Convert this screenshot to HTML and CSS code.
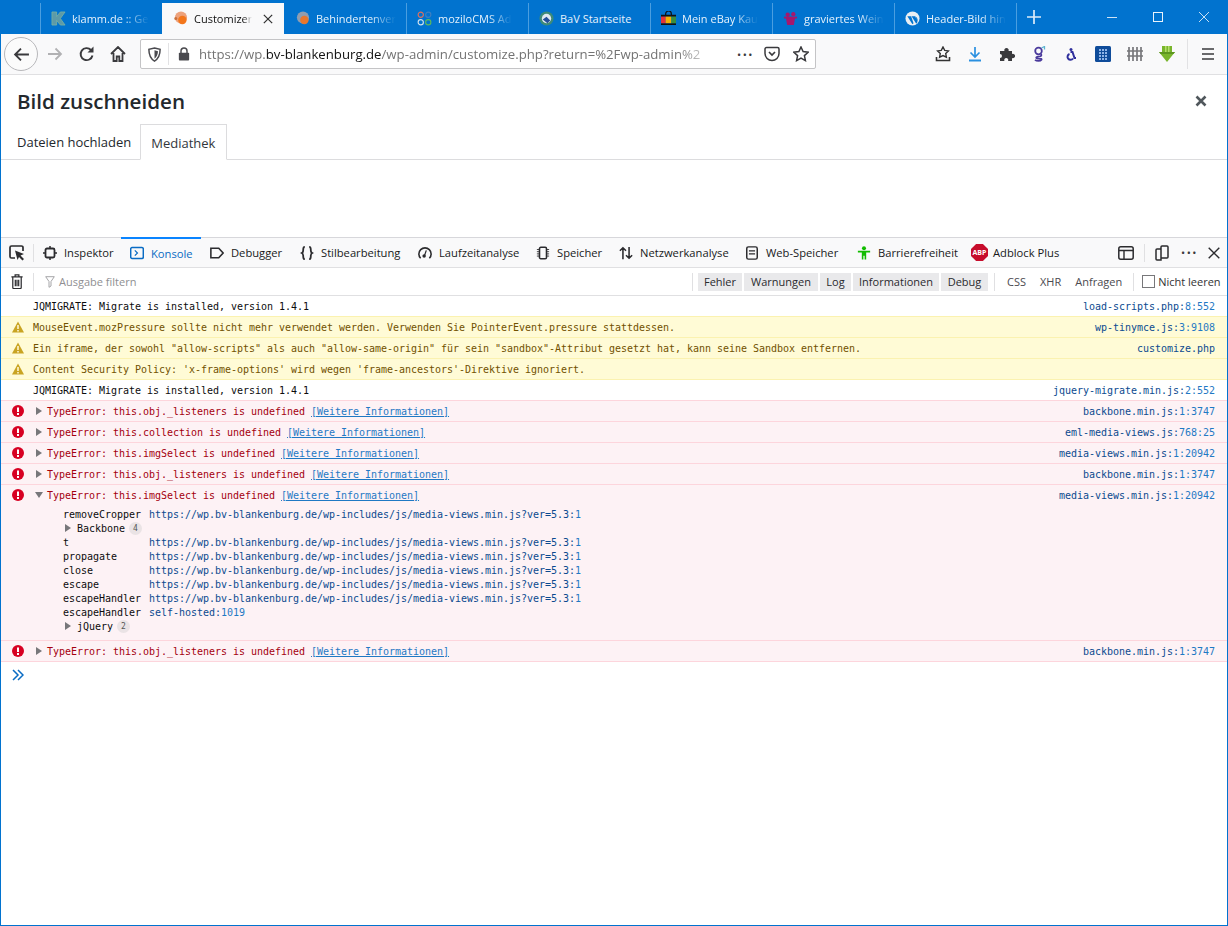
FILE: index.html
```html
<!DOCTYPE html>
<html lang="de">
<head>
    <meta charset="UTF-8">
    <title>Customizer</title>
    <link rel="stylesheet" href="styles.css">
</head>
<body>

    <!-- Tab strip -->
    <div class="tabstrip">
        <div class="tab">
            <svg class="fav" viewBox="0 0 16 16"><path d="M1 1h5v5l4-5h5l-5 7 5 7h-5l-4-5v5H1z" fill="#5d9aa8" stroke="#7fb4a0" stroke-width=".8"/></svg>
            <span class="tab-title">klamm.de :: Ge</span>
        </div>
        <div class="tab active">
            <svg class="fav" viewBox="0 0 16 16"><circle cx="8.500" cy="7" r="6.500" fill="#eda27c"/><circle cx="10" cy="9.500" r="4.500" fill="#f3761b"/><circle cx="3" cy="8" r="1.600" fill="#c9703d"/></svg>
            <span class="tab-title">Customizer</span>
            <svg class="tab-close" viewBox="0 0 12 12"><path d="M1 1l10 10M11 1L1 11" stroke="#333" stroke-width="1.500"/></svg>
        </div>
        <div class="tab">
            <svg class="fav" viewBox="0 0 16 16"><circle cx="8.500" cy="7" r="6.500" fill="#8f9db0"/><circle cx="10" cy="9.500" r="4.500" fill="#e8772e"/></svg>
            <span class="tab-title">Behindertenver</span>
        </div>
        <div class="tab">
            <svg class="fav" viewBox="0 0 16 16" fill="none" stroke-width="1.200"><circle cx="4" cy="4" r="2.800" stroke="#e0705c"/><circle cx="12" cy="4" r="2.800" stroke="#3f7fc0"/><circle cx="4" cy="12" r="2.800" stroke="#cfe0ee"/><circle cx="12" cy="12" r="2.800" stroke="#5cb85c"/></svg>
            <span class="tab-title">moziloCMS Ad</span>
        </div>
        <div class="tab">
            <svg class="fav" viewBox="0 0 16 16"><circle cx="8" cy="8" r="7.500" fill="#3d8a78"/><circle cx="8" cy="8" r="5" fill="#dfe9f2"/><path d="M4 9l4-3 4 4-3 3z" fill="#24509a"/></svg>
            <span class="tab-title nofade">BaV Startseite</span>
        </div>
        <div class="tab">
            <svg class="fav" viewBox="0 0 16 16"><path d="M5 5V3a3 3 0 0 1 6 0v2" fill="none" stroke="#111" stroke-width="1.300"/><path d="M0 4h16v2H0zM0 13h16v2H0z" fill="#111"/><path d="M0 6h5v7H0z" fill="#e43137"/><path d="M5 6h6v7H5z" fill="#f5af02"/><path d="M11 6h5v7h-5z" fill="#3a8f3c"/></svg>
            <span class="tab-title">Mein eBay Kau</span>
        </div>
        <div class="tab">
            <svg class="fav" viewBox="0 0 16 16" fill="#a5176d"><path d="M3 7h10l-1.500 8h-7z"/><circle cx="5" cy="4" r="2.300"/><circle cx="11" cy="3.400" r="2.300"/><path d="M1 6h14v2H1z"/></svg>
            <span class="tab-title">graviertes Wein</span>
        </div>
        <div class="tab last">
            <svg class="fav" viewBox="0 0 16 16"><circle cx="8" cy="8" r="7.500" fill="#e8eef3"/><path d="M2.500 5.500h4l2.600 7.500-1.200 1zM7 5.500h4l2.200 6.500-1.200 1.500zM11.500 6c2 1 2.500 4 1.500 6z" fill="#0173cf"/></svg>
            <span class="tab-title">Header-Bild hin</span>
        </div>
        <svg class="newtab" viewBox="0 0 14 14"><path d="M7 0v14M0 7h14" stroke="#dcecf9" stroke-width="1.700"/></svg>
        <div class="winctl">
            <svg viewBox="0 0 10 10"><path d="M0 5.500h10" stroke="#cfe3f5"/></svg>
            <svg viewBox="0 0 10 10"><rect x=".5" y=".5" width="9" height="9" fill="none" stroke="#eaf3fb"/></svg>
            <svg viewBox="0 0 10 10"><path d="M0 0l10 10M10 0L0 10" stroke="#dcecf9" stroke-width=".9"/></svg>
        </div>
    </div>

    <!-- Navigation bar -->
    <div class="navbar">
        <div class="backbtn">
            <svg viewBox="0 0 16 16"><path d="M15 8H2M7.500 2.500L2 8l5.500 5.500" fill="none" stroke="#3a3a3d" stroke-width="1.800"/></svg>
        </div>
        <svg class="navicon fwd" viewBox="0 0 16 16"><path d="M1 8h13M8.500 2.500L14 8l-5.500 5.500" fill="none" stroke="#b1b1b3" stroke-width="1.800"/></svg>
        <svg class="navicon reload" viewBox="0 0 16 16"><path d="M13.500 9.500A6 6 0 1 1 12 4" fill="none" stroke="#3a3a3d" stroke-width="1.900"/><path d="M14.500 .5v6h-6z" fill="#3a3a3d"/></svg>
        <svg class="navicon home" viewBox="0 0 16 16"><path d="M1 8l7-7 7 7M3.500 7v8h3.200v-4.500h2.600V15h3.200V7" fill="none" stroke="#3a3a3d" stroke-width="1.800"/></svg>
        <div class="urlbar">
            <svg class="shield" viewBox="0 0 16 16"><path d="M8 1l6 1.500c0 6-1.500 10-6 12.500C3.500 12.500 2 8.500 2 2.500z" fill="none" stroke="#4a4a4f" stroke-width="1.600"/><path d="M8 3.500v9c2.500-2 3.500-4.500 3.700-8z" fill="#4a4a4f"/></svg>
            <span class="url-sep"></span>
            <svg class="lock" viewBox="0 0 14 16"><path d="M3.500 7V4.500a3.500 3.500 0 0 1 7 0V7" fill="none" stroke="#4a4a4f" stroke-width="1.700"/><rect x="1" y="6.500" width="12" height="9" rx="1" fill="#4a4a4f"/></svg>
            <div class="url"><span>https://wp.</span><b>bv-blankenburg.de</b><span>/wp-admin/customize.php?return=%2Fwp-admin%2</span></div>
            <div class="dots">•••</div>
            <svg class="pocket" viewBox="0 0 16 16"><path d="M1 3a1.500 1.500 0 0 1 1.500-1.500h11A1.500 1.500 0 0 1 15 3v4.500a7 7 0 0 1-14 0z" fill="none" stroke="#3a3a3d" stroke-width="1.500"/><path d="M5 6l3 3 3-3" fill="none" stroke="#3a3a3d" stroke-width="1.700"/></svg>
            <svg class="star" viewBox="0 0 16 16"><path d="M8 1l2.100 4.600 5 .6-3.700 3.400 1 5L8 12.100 3.600 14.600l1-5L.9 6.200l5-.6z" fill="none" stroke="#3a3a3d" stroke-width="1.500"/></svg>
        </div>
        <div class="addons">
            <svg viewBox="0 0 16 16"><path d="M8 1l1.700 3.400 3.700.5-2.700 2.600.7 3.700L8 9.500l-3.400 1.700.7-3.700L2.600 4.900l3.700-.5z" fill="none" stroke="#333" stroke-width="1.400"/><path d="M1.500 11v3.500h13V11" fill="none" stroke="#333" stroke-width="1.600"/></svg>
            <svg viewBox="0 0 16 16"><path d="M8 1v10M3.500 6.500L8 11l4.500-4.500" fill="none" stroke="#2a90e0" stroke-width="1.700"/><path d="M2 14.500h12" stroke="#2a90e0" stroke-width="2"/></svg>
            <svg viewBox="0 0 16 16"><path d="M1 5h4.500a2.200 2.200 0 1 1 4 0H13v3a2.200 2.200 0 1 1 0 4v3H9a2 2 0 1 0-3.500 0H1v-3a2 2 0 1 0 0-4z" fill="#3a3a3d"/></svg>
            <svg viewBox="0 0 16 16"><circle cx="7.500" cy="5" r="3.300" fill="none" stroke="#4a3a9c" stroke-width="1.800"/><path d="M10 8c.8 1 .5 2-1 2.300-3 .3-4.500.8-3.500 2 1.500 1 6-.2 5 1.500-1 1.500-5 1.500-6.500 0" fill="none" stroke="#4a3a9c" stroke-width="1.700"/><path d="M10.500 2l3-1.500v3" fill="none" stroke="#5cb3d0" stroke-width="1.300"/></svg>
            <svg viewBox="0 0 16 16"><circle cx="8" cy="3.500" r="1.500" fill="#2f2f9c"/><path d="M7.500 6h2l2 6h1.500M6.500 8a3 3 0 1 0 3.500 4.500" fill="none" stroke="#2f2f9c" stroke-width="2"/></svg>
            <svg viewBox="0 0 16 16"><rect width="16" height="16" rx="1.500" fill="#0f4c9a"/><path d="M4 3h2v2H4zM7 3h2v2H7zM10 3h2v2h-2zM4 6h2v2H4zM7 6h2v2H7zM10 6h2v2h-2zM4 9h2v2H4zM7 9h2v2H7zM10 9h2v2h-2zM4 12h2v2H4zM7 12h2v2H7zM10 12h2v2h-2z" fill="#8fb4e6"/></svg>
            <svg viewBox="0 0 16 16"><path d="M2 1v14M6 1v14M10 1v14M14 1v14M0 5h16M0 10h16" stroke="#77777a" stroke-width="1.700"/></svg>
            <svg viewBox="0 0 16 16"><path d="M3 0h10v6h3l-8 10-8-10h3z" fill="#79b52c"/><path d="M6 0h1.500v7H6zM9 0h1.500v7H9z" fill="#b4de6c"/><path d="M0 6h16l-1.500 2h-13z" fill="#5d9620"/></svg>
        </div>
        <span class="nav-sep"></span>
        <svg class="hamburger" viewBox="0 0 14 12"><path d="M1 1h12M1 6h12M1 11h12" stroke="#3a3a3d" stroke-width="1.700"/></svg>
    </div>

    <!-- Page content -->
    <div class="page">
        <div class="page-head">
            <h1>Bild zuschneiden</h1>
            <svg class="page-close" viewBox="0 0 12 12"><path d="M1.500 1.500l9 9M10.500 1.500l-9 9" stroke="#50575c" stroke-width="2.600"/></svg>
        </div>
        <div class="page-tabs">
            <div class="page-tab">Dateien hochladen</div>
            <div class="page-tab current">Mediathek</div>
        </div>
    </div>

    <!-- Devtools -->
    <div class="devtools">
        <div class="dt-tabs">
            <svg class="dt-picker" viewBox="0 0 16 16"><path d="M6 13H2.500A1.500 1.500 0 0 1 1 11.500v-9A1.500 1.500 0 0 1 2.500 1h10A1.500 1.500 0 0 1 14 2.500V6" fill="none" stroke="#2b2b2e" stroke-width="1.700"/><path d="M6 5.500l9 3.500-3.500 1.500L15 14l-1.500 1.500-3.500-3.500L8.500 15z" fill="#2b2b2e"/></svg>
            <span class="dt-sep"></span>
            <div class="dt-tab inspektor"><svg viewBox="0 0 14 14"><rect x="2.500" y="2.500" width="9" height="9" rx="1.500" fill="none" stroke="#2b2b2e" stroke-width="1.800"/><path d="M7 0v2.500M7 11.500V14M0 7h2.500M11.500 7H14" stroke="#2b2b2e" stroke-width="1.500"/></svg>Inspektor</div>
            <div class="dt-tab konsole"><svg viewBox="0 0 16 14"><rect x=".8" y=".8" width="14.400" height="12.400" rx="1.500" fill="none" stroke="#0a6cc4" stroke-width="1.700"/><path d="M5.500 4l3 3-3 3" fill="none" stroke="#0a6cc4" stroke-width="1.400"/></svg>Konsole</div>
            <div class="dt-tab debugger"><svg viewBox="0 0 16 14"><path d="M1 1.500h9l5 5.500-5 5.500H1z" fill="none" stroke="#2b2b2e" stroke-width="1.800"/></svg>Debugger</div>
            <div class="dt-tab stil"><svg viewBox="0 0 16 16"><path d="M5.500 1C3 1 4 3.500 3.500 6 3.300 7.300 2 8 2 8s1.300.7 1.500 2c.5 2.500-.5 5 2 5M10.500 1c2.500 0 1.500 2.500 2 5 .2 1.300 1.500 2 1.500 2s-1.300.7-1.500 2c-.5 2.500.5 5-2 5" fill="none" stroke="#2b2b2e" stroke-width="2"/></svg>Stilbearbeitung</div>
            <div class="dt-tab laufzeit"><svg viewBox="0 0 16 14"><path d="M3 13A7 7 0 1 1 13 13" fill="none" stroke="#2b2b2e" stroke-width="1.800"/><path d="M9.500 4L7.500 9.500" stroke="#2b2b2e" stroke-width="1.400"/><circle cx="7" cy="10.500" r="2" fill="#2b2b2e"/></svg>Laufzeitanalyse</div>
            <div class="dt-tab speicher"><svg viewBox="0 0 16 16"><rect x="4" y="1.500" width="8" height="13" rx="1.500" fill="none" stroke="#2b2b2e" stroke-width="1.800"/><path d="M1 4h3M1 6.500h3M1 9h3M1 11.500h3M12 4h3M12 6.500h3M12 9h3M12 11.500h3" stroke="#2b2b2e"/></svg>Speicher</div>
            <div class="dt-tab netz"><svg viewBox="0 0 16 16"><path d="M4.500 15V2M1 5.500L4.500 2 8 5.500M11.500 1v13M8 10.500l3.500 3.500 3.500-3.500" fill="none" stroke="#2b2b2e" stroke-width="1.800"/></svg>Netzwerkanalyse</div>
            <div class="dt-tab web"><svg viewBox="0 0 14 16"><rect x="1" y="1" width="12" height="14" rx="2" fill="none" stroke="#2b2b2e" stroke-width="1.700"/><path d="M3.500 5.500h7M3.500 9h7" stroke="#2b2b2e" stroke-width="1.500"/></svg>Web-Speicher</div>
            <div class="dt-tab barriere"><svg viewBox="0 0 16 16"><circle cx="8" cy="2.500" r="2.300" fill="#12bc00"/><path d="M1 5.500h14v2h-4.500v8H8.700v-4.500H7.300V15.500H5.500v-8H1z" fill="#12bc00"/></svg>Barrierefreiheit</div>
            <div class="dt-tab abp"><span class="abp-badge">ABP</span>Adblock Plus</div>
            <div class="dt-right">
                <svg class="dock1" viewBox="0 0 16 14"><rect x=".8" y=".8" width="14.400" height="12.400" rx="2" fill="none" stroke="#2b2b2e" stroke-width="1.500"/><path d="M1 4.500h14M6 4.500v8.500" stroke="#2b2b2e" stroke-width="1.400"/></svg>
                <span class="dt-sep"></span>
                <svg class="dock2" viewBox="0 0 14 16"><path d="M6 4H2a1 1 0 0 0-1 1v9a1 1 0 0 0 1 1h4zM6 12V2a1 1 0 0 1 1-1h5a1 1 0 0 1 1 1v10a1 1 0 0 1-1 1H6" fill="none" stroke="#2b2b2e" stroke-width="1.500"/></svg>
                <div class="dots dt-dots">•••</div>
                <svg class="dt-x" viewBox="0 0 12 12"><path d="M.7.700l10.600 10.600M11.300.700L.7 11.300" stroke="#2b2b2e" stroke-width="1.400"/></svg>
            </div>
        </div>

        <div class="dt-filter">
            <svg class="trash" viewBox="0 0 12 16"><path d="M0 3h12M4 3V1h4v2M1.500 3.500v11a1 1 0 0 0 1 1h7a1 1 0 0 0 1-1v-11M4.200 6v7M6 6v7M7.800 6v7" fill="none" stroke="#2b2b2e" stroke-width="1.300"/></svg>
            <span class="dt-sep"></span>
            <svg class="funnel" viewBox="0 0 10 12"><path d="M.7.700h8.600L6 5.500V10L4 11.300V5.500z" fill="none" stroke="#a5a5a8"/></svg>
            <span class="filter-text">Ausgabe filtern</span>
            <span class="dt-sep sep-a"></span>
            <span class="chip w44">Fehler</span>
            <span class="chip w74">Warnungen</span>
            <span class="chip w31">Log</span>
            <span class="chip w86">Informationen</span>
            <span class="chip w47">Debug</span>
            <span class="dt-sep sep-b"></span>
            <span class="plain">CSS</span>
            <span class="plain">XHR</span>
            <span class="plain">Anfragen</span>
            <span class="dt-sep sep-c"></span>
            <span class="checkbox"></span>
            <span class="keep">Nicht leeren</span>
        </div>

        <div class="log">
            <div class="row">
                <span class="msg">JQMIGRATE: Migrate is installed, version 1.4.1</span>
                <span class="src">load-scripts.php:<i>8:552</i></span>
            </div>
            <div class="row warn">
                <svg class="ic" viewBox="0 0 12 12"><path d="M6 .5L12 11.500H0z" fill="#c9a422"/><path d="M5.200 4h1.600v4H5.200zM5.200 9h1.600v1.500H5.200z" fill="#fff6d0"/></svg>
                <span class="msg">MouseEvent.mozPressure sollte nicht mehr verwendet werden. Verwenden Sie PointerEvent.pressure stattdessen.</span>
                <span class="src">wp-tinymce.js:<i>3:9108</i></span>
            </div>
            <div class="row warn">
                <svg class="ic" viewBox="0 0 12 12"><path d="M6 .5L12 11.500H0z" fill="#c9a422"/><path d="M5.200 4h1.600v4H5.200zM5.200 9h1.600v1.500H5.200z" fill="#fff6d0"/></svg>
                <span class="msg">Ein iframe, der sowohl "allow-scripts" als auch "allow-same-origin" für sein "sandbox"-Attribut gesetzt hat, kann seine Sandbox entfernen.</span>
                <span class="src">customize.php</span>
            </div>
            <div class="row warn">
                <svg class="ic" viewBox="0 0 12 12"><path d="M6 .5L12 11.500H0z" fill="#c9a422"/><path d="M5.200 4h1.600v4H5.200zM5.200 9h1.600v1.500H5.200z" fill="#fff6d0"/></svg>
                <span class="msg">Content Security Policy: 'x-frame-options' wird wegen 'frame-ancestors'-Direktive ignoriert.</span>
            </div>
            <div class="row">
                <span class="msg">JQMIGRATE: Migrate is installed, version 1.4.1</span>
                <span class="src">jquery-migrate.min.js:<i>2:552</i></span>
            </div>
            <div class="row err">
                <svg class="ic" viewBox="0 0 12 12"><circle cx="6" cy="6" r="6" fill="#d70022"/><path d="M5 2.500h2v4.500H5zM5 8h2v2H5z" fill="#fff"/></svg>
                <span class="tri"></span>
                <span class="msg">TypeError: this.obj._listeners is undefined <a>[Weitere Informationen]</a></span>
                <span class="src">backbone.min.js:<i>1:3747</i></span>
            </div>
            <div class="row err">
                <svg class="ic" viewBox="0 0 12 12"><circle cx="6" cy="6" r="6" fill="#d70022"/><path d="M5 2.500h2v4.500H5zM5 8h2v2H5z" fill="#fff"/></svg>
                <span class="tri"></span>
                <span class="msg">TypeError: this.collection is undefined <a>[Weitere Informationen]</a></span>
                <span class="src">eml-media-views.js:<i>768:25</i></span>
            </div>
            <div class="row err">
                <svg class="ic" viewBox="0 0 12 12"><circle cx="6" cy="6" r="6" fill="#d70022"/><path d="M5 2.500h2v4.500H5zM5 8h2v2H5z" fill="#fff"/></svg>
                <span class="tri"></span>
                <span class="msg">TypeError: this.imgSelect is undefined <a>[Weitere Informationen]</a></span>
                <span class="src">media-views.min.js:<i>1:20942</i></span>
            </div>
            <div class="row err">
                <svg class="ic" viewBox="0 0 12 12"><circle cx="6" cy="6" r="6" fill="#d70022"/><path d="M5 2.500h2v4.500H5zM5 8h2v2H5z" fill="#fff"/></svg>
                <span class="tri"></span>
                <span class="msg">TypeError: this.obj._listeners is undefined <a>[Weitere Informationen]</a></span>
                <span class="src">backbone.min.js:<i>1:3747</i></span>
            </div>
            <div class="row err open">
                <div class="row-head">
                    <svg class="ic" viewBox="0 0 12 12"><circle cx="6" cy="6" r="6" fill="#d70022"/><path d="M5 2.500h2v4.500H5zM5 8h2v2H5z" fill="#fff"/></svg>
                    <span class="tri down"></span>
                    <span class="msg">TypeError: this.imgSelect is undefined <a>[Weitere Informationen]</a></span>
                    <span class="src">media-views.min.js:<i>1:20942</i></span>
                </div>
                <div class="stack">
                    <div class="fr"><span class="fn">removeCropper</span><span class="loc">https://wp.bv-blankenburg.de/wp-includes/js/media-views.min.js?ver=5.3:<i>1</i></span></div>
                    <div class="fr group"><span class="tri"></span>Backbone<span class="count">4</span></div>
                    <div class="fr"><span class="fn">t</span><span class="loc">https://wp.bv-blankenburg.de/wp-includes/js/media-views.min.js?ver=5.3:<i>1</i></span></div>
                    <div class="fr"><span class="fn">propagate</span><span class="loc">https://wp.bv-blankenburg.de/wp-includes/js/media-views.min.js?ver=5.3:<i>1</i></span></div>
                    <div class="fr"><span class="fn">close</span><span class="loc">https://wp.bv-blankenburg.de/wp-includes/js/media-views.min.js?ver=5.3:<i>1</i></span></div>
                    <div class="fr"><span class="fn">escape</span><span class="loc">https://wp.bv-blankenburg.de/wp-includes/js/media-views.min.js?ver=5.3:<i>1</i></span></div>
                    <div class="fr"><span class="fn">escapeHandler</span><span class="loc">https://wp.bv-blankenburg.de/wp-includes/js/media-views.min.js?ver=5.3:<i>1</i></span></div>
                    <div class="fr"><span class="fn">escapeHandler</span><span class="loc">self-hosted:<i>1019</i></span></div>
                    <div class="fr group"><span class="tri"></span>jQuery<span class="count">2</span></div>
                </div>
            </div>
            <div class="row err">
                <svg class="ic" viewBox="0 0 12 12"><circle cx="6" cy="6" r="6" fill="#d70022"/><path d="M5 2.500h2v4.500H5zM5 8h2v2H5z" fill="#fff"/></svg>
                <span class="tri"></span>
                <span class="msg">TypeError: this.obj._listeners is undefined <a>[Weitere Informationen]</a></span>
                <span class="src">backbone.min.js:<i>1:3747</i></span>
            </div>
            <div class="prompt">
                <svg viewBox="0 0 12 12"><path d="M1 1l5 5-5 5M6 1l5 5-5 5" fill="none" stroke="#0a6cc4" stroke-width="1.500"/></svg>
            </div>
        </div>
    </div>

</body>
</html>
```

FILE: styles.css
```css
* {
    margin: 0;
    padding: 0;
    box-sizing: border-box;
}

html, body {
    height: 100%;
}

body {
    width: 1228px;
    height: 926px;
    overflow: hidden;
    background: #fff;
    border: 1px solid #0173cf;
    border-top: 0;
    font-family: 'Open Sans', sans-serif;
    font-size: 11.2px;
    color: #0c0c0d;
    display: flex;
    flex-direction: column;
}

svg {
    display: block;
    flex: none;
}

/* Tab strip */
.tabstrip {
    height: 34px;
    margin: 0 -1px;
    padding: 3px 0 0 40px;
    background: #0173cf;
    display: flex;
    flex: none;
}

.tab {
    width: 122px;
    display: flex;
    align-items: center;
    padding-left: 10px;
    border-left: 1px solid #4a9ee0;
    color: #e6f2fc;
    font-size: 11px;
}

.tab.last {
    border-right: 1px solid #4a9ee0;
    width: 123px;
}

.tab.active {
    background: #f9f9fa;
    color: #111;
    border-left-color: #f9f9fa;
}

.tab.active + .tab {
    border-left-color: #0173cf;
}

.fav {
    width: 15px;
    height: 15px;
    margin-right: 6px;
}

.tab-title {
    white-space: nowrap;
    -webkit-mask-image: linear-gradient(to right, #000 68%, transparent 100%);
    mask-image: linear-gradient(to right, #000 68%, transparent 100%);
}

.tab-title.nofade {
    -webkit-mask-image: none;
    mask-image: none;
}

.tab.active .tab-title {
    -webkit-mask-image: linear-gradient(to right, #000 85%, transparent 100%);
    mask-image: linear-gradient(to right, #000 85%, transparent 100%);
}

.tab-close {
    width: 10px;
    height: 10px;
    margin: 0 11px 0 auto;
}

.newtab {
    width: 14px;
    height: 14px;
    margin: 7px 0 0 10px;
}

.winctl {
    margin-left: auto;
    display: flex;
    padding: 9px 19px 0 0;
    gap: 36px;
}

.winctl svg {
    width: 10px;
    height: 10px;
}

/* Navigation bar */
.navbar {
    height: 41px;
    margin: 0 -1px;
    background: #f9f9fa;
    border-bottom: 1px solid #e0e0e2;
    display: flex;
    align-items: center;
    flex: none;
    padding-left: 4px;
}

.backbtn {
    width: 34px;
    height: 34px;
    border: 1px solid #b8b8bb;
    border-radius: 50%;
    background: #fbfbfb;
    display: flex;
    align-items: center;
    justify-content: center;
}

.backbtn svg {
    width: 17px;
    height: 17px;
}

.navicon {
    width: 16px;
    height: 16px;
}

.fwd {
    margin-left: 9px;
}

.reload {
    margin-left: 16px;
}

.home {
    margin-left: 15px;
}

.urlbar {
    width: 676px;
    height: 30px;
    margin-left: 14px;
    background: #fff;
    border: 1px solid #c4c4c6;
    border-radius: 2px;
    display: flex;
    align-items: center;
}

.shield {
    width: 15px;
    height: 15px;
    margin-left: 6px;
}

.url-sep {
    width: 1px;
    height: 22px;
    background: #e2e2e4;
    margin-left: 6px;
}

.lock {
    width: 12px;
    height: 14px;
    margin-left: 9px;
}

.url {
    width: 519px;
    margin-left: 9px;
    font-size: 13.2px;
    color: #737373;
    white-space: nowrap;
    overflow: hidden;
    -webkit-mask-image: linear-gradient(to right, #000 92%, transparent);
    mask-image: linear-gradient(to right, #000 92%, transparent);
}

.url b {
    font-weight: 400;
    color: #111;
}

.dots {
    font-size: 11px;
    letter-spacing: 1.5px;
    color: #3a3a3d;
    line-height: 1;
    white-space: nowrap;
}

.urlbar .dots {
    margin-left: 19px;
}

.pocket {
    width: 16px;
    height: 16px;
    margin-left: 10px;
}

.star {
    width: 16px;
    height: 16px;
    margin-left: 13px;
}

.addons {
    display: flex;
    gap: 16px;
    margin-left: 119px;
}

.addons svg {
    width: 16px;
    height: 16px;
}

.nav-sep {
    width: 1px;
    height: 30px;
    background: #e2e2e4;
    margin-left: 12px;
}

.hamburger {
    width: 14px;
    height: 12px;
    margin-left: 13px;
}

/* Page */
.page {
    height: 162px;
    flex: none;
}

.page-head {
    height: 49px;
    display: flex;
    align-items: center;
    justify-content: space-between;
    padding: 3px 20px 0 16px;
}

.page-head h1 {
    font-size: 20.6px;
    font-weight: 600;
    color: #23282d;
}

.page-close {
    width: 12px;
    height: 12px;
}

.page-tabs {
    height: 36px;
    display: flex;
    padding-left: 16px;
    border-bottom: 1px solid #dcdcde;
    font-size: 13px;
    color: #23282d;
}

.page-tab {
    line-height: 36px;
    margin-right: 9px;
}

.page-tab.current {
    padding: 0 11px 0 10px;
    height: 36px;
    margin-right: 0;
    color: #32373c;
    background: #fff;
    border: 1px solid #dcdcde;
    border-bottom-color: #fff;
    line-height: 36px;
}

/* Devtools */
.devtools {
    flex: 1;
    border-top: 1px solid #d7d7db;
    min-height: 0;
}

.dt-tabs {
    height: 30px;
    background: #f9f9fa;
    border-bottom: 1px solid #e0e0e2;
    display: flex;
    align-items: center;
}

.dt-picker {
    width: 16px;
    height: 16px;
    margin-left: 8px;
}

.dt-sep {
    width: 1px;
    height: 18px;
    background: #e0e0e2;
    flex: none;
}

.dt-tabs > .dt-sep {
    margin-left: 8px;
}

.dt-tab {
    display: flex;
    align-items: center;
    height: 29px;
    white-space: nowrap;
    color: #18191a;
}

.dt-tab svg {
    width: 14px;
    height: 14px;
    margin-right: 7px;
}

.inspektor {
    margin-left: 9px;
    width: 78px;
}

.konsole {
    width: 80px;
    padding-left: 9px;
    color: #0a6cc4;
    margin-top: -1px;
    height: 30px;
    border-top: 2px solid #0a84ff;
}

.debugger {
    margin-left: 9px;
    width: 90px;
}

.stil {
    width: 118px;
}

.laufzeit {
    width: 118px;
}

.speicher {
    width: 83px;
}

.netz {
    width: 126px;
}

.web {
    width: 112px;
}

.barriere {
    width: 114px;
}

.abp-badge {
    width: 17px;
    height: 17px;
    background: #c70d2c;
    clip-path: polygon(30% 0, 70% 0, 100% 30%, 100% 70%, 70% 100%, 30% 100%, 0 70%, 0 30%);
    color: #fff;
    font-size: 7px;
    font-weight: 700;
    text-align: center;
    line-height: 17px;
    margin-right: 5px;
}

.dt-right {
    margin-left: auto;
    display: flex;
    align-items: center;
}

.dock1 {
    width: 16px;
    height: 14px;
}

.dt-right .dt-sep {
    margin-left: 10px;
}

.dock2 {
    width: 14px;
    height: 16px;
    margin-left: 10px;
}

.dt-dots {
    margin-left: 12px;
}

.dt-x {
    width: 12px;
    height: 12px;
    margin: 0 7px 0 10px;
}

/* Filter bar */
.dt-filter {
    height: 28px;
    background: #fff;
    border-bottom: 1px solid #e0e0e2;
    display: flex;
    align-items: center;
    color: #333;
    font-size: 11px;
}

.trash {
    width: 12px;
    height: 15px;
    margin-left: 10px;
}

.trash + .dt-sep {
    margin-left: 10px;
}

.funnel {
    width: 10px;
    height: 12px;
    margin-left: 11px;
}

.filter-text {
    margin-left: 4px;
    width: 633px;
    color: #8f8f92;
}

.chip {
    height: 18px;
    line-height: 18px;
    text-align: center;
    background: #e9e9eb;
    margin-right: 2px;
    color: #2a2a2e;
}

.sep-a {
    margin-right: 5px;
}

.w44 {
    width: 44px;
}

.w74 {
    width: 74px;
}

.w31 {
    width: 31px;
}

.w86 {
    width: 86px;
}

.w47 {
    width: 47px;
}

.sep-b {
    margin: 0 12px 0 4px;
}

.plain {
    margin-right: 14px;
    color: #4a4a4f;
}

.sep-c {
    margin: 0 8px 0 -3px;
}

.checkbox {
    width: 13px;
    height: 13px;
    border: 1px solid #77777a;
    background: #fff;
}

.keep {
    margin-left: 3px;
    white-space: nowrap;
}

/* Log rows */
.log {
    font-family: 'DejaVu Sans Mono', monospace;
    font-size: 10px;
    letter-spacing: -0.02px;
    background: #fff;
}

.row {
    display: flex;
    align-items: center;
    height: 21px;
    padding: 0 12px 0 32px;
    border-bottom: 1px solid #f0f0f2;
    white-space: nowrap;
}

.row:has(+ .warn) {
    border-bottom-color: #fbf2b0;
}

.row:has(+ .err) {
    border-bottom-color: #fdd5dc;
}

.row .msg {
    flex: 1;
}

.ic {
    width: 12px;
    height: 12px;
    margin: 0 9px 0 -21px;
}

.row.err .ic {
    margin-right: 12px;
}

.row.warn {
    background: #fffbd6;
    border-bottom-color: #fbf2b0;
    color: #715100;
}

.row.err {
    background: #fdf2f5;
    border-bottom-color: #fdd5dc;
    color: #a4000f;
}

.src {
    color: #0b4a8f;
}

.src i,
.loc i {
    font-style: normal;
    color: #1f79c4;
}

a {
    color: #1f79c4;
    text-decoration: underline;
}

.tri {
    width: 0;
    height: 0;
    border-left: 6px solid #77777a;
    border-top: 4px solid transparent;
    border-bottom: 4px solid transparent;
    margin-right: 5px;
}

.tri.down {
    border-left: 4px solid transparent;
    border-right: 4px solid transparent;
    border-top: 6px solid #77777a;
    border-bottom: 0;
    margin: 0 4px 0 -1px;
}

.row.open {
    display: block;
    height: 156px;
}

.row-head {
    display: flex;
    align-items: center;
    height: 20px;
}

.stack {
    padding: 2px 0 0 30px;
    color: #0c0c0d;
}

.fr {
    display: flex;
    align-items: center;
    height: 14px;
}

.fn {
    width: 86px;
}

.loc {
    color: #0b4a8f;
}

.group {
    padding-left: 2px;
}

.group .tri {
    margin-right: 6px;
}

.count {
    width: 13px;
    height: 13px;
    border-radius: 50%;
    background: #eae3e5;
    color: #555;
    font-size: 8px;
    line-height: 13px;
    text-align: center;
    margin-left: 4px;
}

.prompt {
    height: 26px;
    display: flex;
    align-items: center;
    padding-left: 11px;
}

.prompt svg {
    width: 12px;
    height: 12px;
}
```
